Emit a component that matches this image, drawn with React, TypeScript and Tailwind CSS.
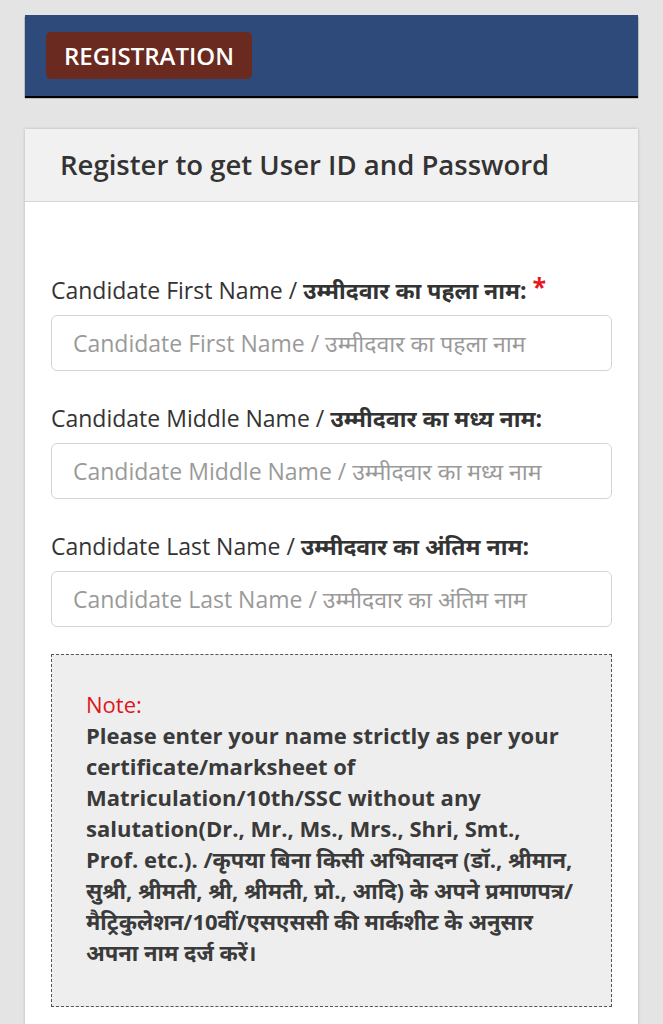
export default function App() {
  const fields = [
    {
      en: 'Candidate First Name',
      hi: 'उम्मीदवार का पहला नाम',
      required: true,
    },
    {
      en: 'Candidate Middle Name',
      hi: 'उम्मीदवार का मध्य नाम',
      required: false,
    },
    {
      en: 'Candidate Last Name',
      hi: 'उम्मीदवार का अंतिम नाम',
      required: false,
    },
  ];

  return (
    <div className="min-h-[1024px] bg-[#e4e4e4] px-[25px] pt-[15px] pb-10 font-['Open_Sans','Noto_Sans',sans-serif] text-[#333]">
      <div className="bg-[#2e4a7b] px-[21px] pt-[17px] pb-[17px] shadow-[0_2px_1px_#000]">
        <div className="inline-flex h-[47px] items-center rounded-[5px] bg-[#6a2a1f] px-[18px] text-[24px] font-semibold text-white">
          REGISTRATION
        </div>
      </div>

      <div className="mt-[33px] bg-white shadow-[0_0_3px_rgba(0,0,0,0.2)]">
        <div className="flex h-[73px] items-center border-b border-[#d6d6d6] bg-[#f1f1f1] px-[35px]">
          <h1 className="text-[27.5px] font-semibold text-[#333]">Register to get User ID and Password</h1>
        </div>

        <div className="px-[26px] pt-[73px] pb-6">
          <div className="flex flex-col gap-[32px]">
            {fields.map((f) => (
              <div key={f.en}>
                <label className="flex items-start text-[23px] leading-[30px] text-[#333]">
                  <span>
                    {f.en} / <span className="font-bold">{f.hi}:</span>
                  </span>
                  {f.required && <span className="ml-[6px] -mt-[4px] text-[25px] font-bold text-[#e4181e]">*</span>}
                </label>
                <input
                  className="mt-[10px] h-[56px] w-full rounded-[6px] border border-[#d4d4d4] bg-white px-[21px] text-[23px] placeholder:text-[#9a9a9a] focus:outline-none"
                  placeholder={`${f.en} / ${f.hi}`}
                />
              </div>
            ))}
          </div>

          <div className="mt-[27px] border border-dashed border-[#555] bg-[#eeeeee] px-[34px] pt-[34px] pb-[38px] text-[22px] leading-[31px] font-bold text-[#3a3a3a]">
            <div className="font-normal text-[#e0141b]">Note:</div>
            <p>
              Please enter your name strictly as per your certificate/marksheet of Matriculation/10th/SSC without any
              salutation(Dr., Mr., Ms., Mrs., Shri, Smt., Prof. etc.). /कृपया बिना किसी अभिवादन (डॉ., श्रीमान, सुश्री,
              श्रीमती, श्री, श्रीमती, प्रो., आदि) के अपने प्रमाणपत्र/ मैट्रिकुलेशन/10वीं/एसएससी की मार्कशीट के अनुसार
              अपना नाम दर्ज करें।
            </p>
          </div>
        </div>
      </div>
    </div>
  );
}
